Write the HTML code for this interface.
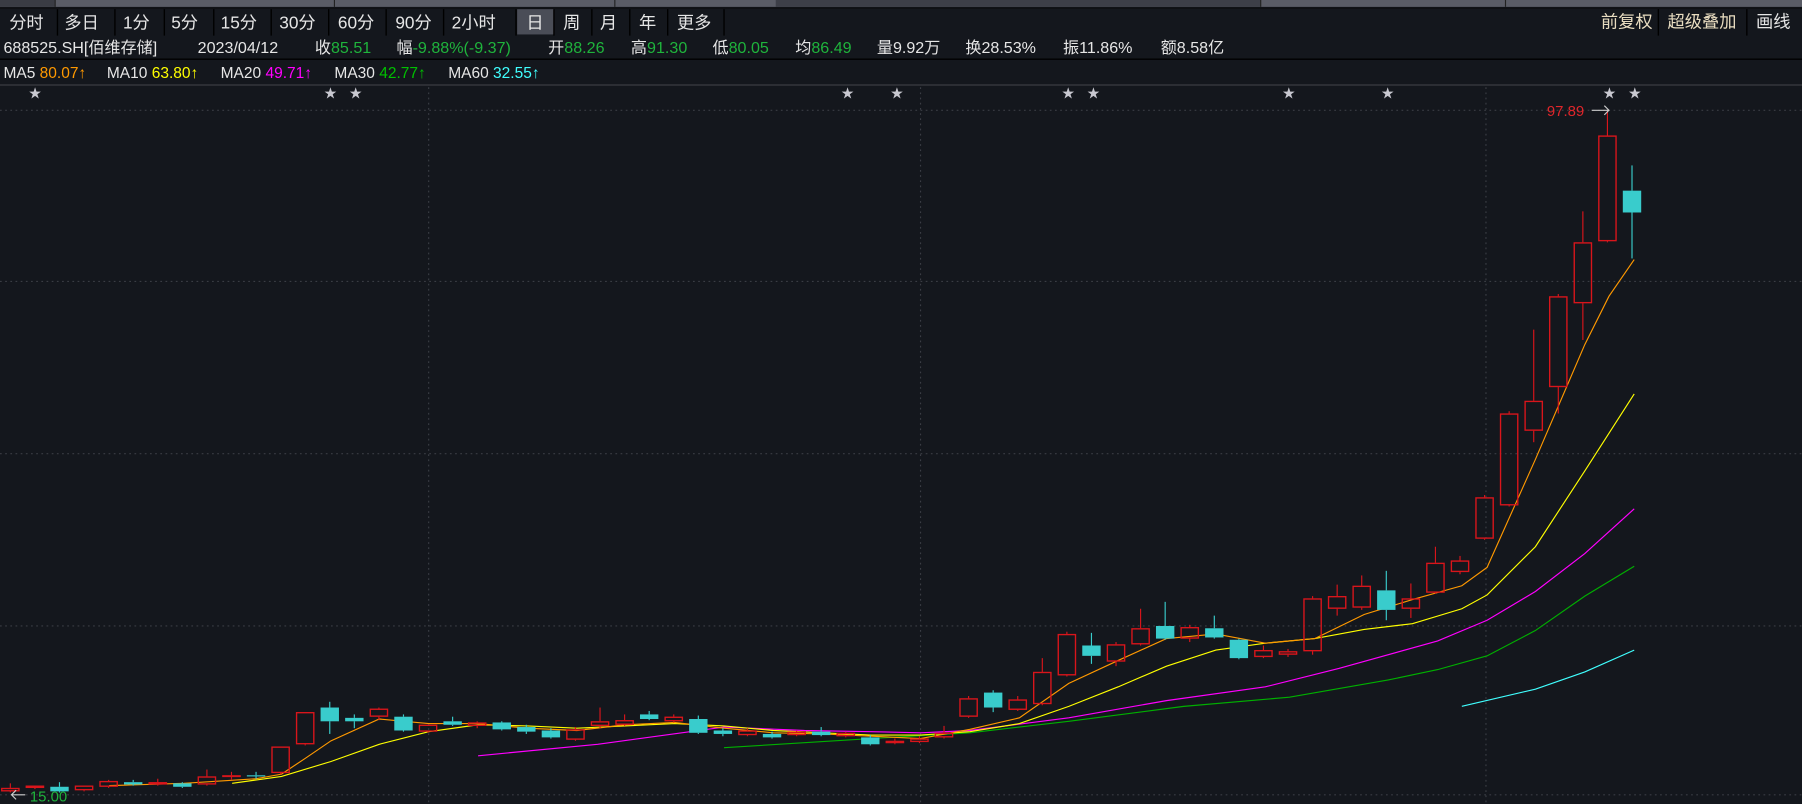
<!DOCTYPE html>
<html><head><meta charset="utf-8">
<style>
html,body{margin:0;padding:0;background:#14171d;width:1802px;height:804px;overflow:hidden}
svg{display:block}
text{font-family:"Liberation Sans","Noto Sans CJK SC",sans-serif}
</style></head>
<body>
<svg id="s" width="1802" height="804" viewBox="0 0 1568 700" preserveAspectRatio="none" xmlns="http://www.w3.org/2000/svg">
<rect width="1568" height="700" fill="#14171d"/>
<!-- top gray strip -->
<rect x="0" y="0" width="1568" height="6" fill="#5a5c66"/>
<rect x="0" y="0" width="48" height="6" fill="#3a3c44"/>
<line x1="48" y1="0" x2="48" y2="6" stroke="#222"/>
<line x1="291" y1="0" x2="291" y2="6" stroke="#222"/>
<line x1="535" y1="0" x2="535" y2="6" stroke="#222"/>
<rect x="675" y="0" width="422" height="6" fill="#3d3f48"/>
<line x1="1097" y1="0" x2="1097" y2="6" stroke="#222"/>
<line x1="1310" y1="0" x2="1310" y2="6" stroke="#222"/>
<line x1="0" y1="7" x2="1568" y2="7" stroke="#0c0d10"/>
<!-- toolbar -->
<rect x="450" y="8" width="32" height="22" fill="#4a4d57"/>
<g fill="#e6e6e6" font-size="15">
<text x="8" y="25">分时</text><text x="56" y="25">多日</text><text x="107" y="25">1分</text>
<text x="149" y="25">5分</text><text x="192" y="25">15分</text><text x="243" y="25">30分</text>
<text x="294" y="25">60分</text><text x="344" y="25">90分</text><text x="393" y="25">2小时</text>
<text x="458" y="25">日</text><text x="490" y="25">周</text><text x="522" y="25">月</text>
<text x="556" y="25">年</text><text x="589" y="25">更多</text>
<text x="1393" y="24" fill="#e8dcc0">前复权</text><text x="1451" y="24" fill="#e8dcc0">超级叠加</text><text x="1528" y="24">画线</text>
</g>
<g stroke="#000" stroke-width="1.2">
<line x1="50" y1="8" x2="50" y2="31"/><line x1="100" y1="8" x2="100" y2="31"/><line x1="143" y1="8" x2="143" y2="31"/>
<line x1="186" y1="8" x2="186" y2="31"/><line x1="236" y1="8" x2="236" y2="31"/><line x1="286" y1="8" x2="286" y2="31"/>
<line x1="336" y1="8" x2="336" y2="31"/><line x1="386" y1="8" x2="386" y2="31"/><line x1="449" y1="8" x2="449" y2="31"/>
<line x1="482" y1="8" x2="482" y2="31"/><line x1="515" y1="8" x2="515" y2="31"/><line x1="548" y1="8" x2="548" y2="31"/>
<line x1="581" y1="8" x2="581" y2="31"/><line x1="630" y1="8" x2="630" y2="31"/>
<line x1="1443" y1="8" x2="1443" y2="31"/><line x1="1520" y1="8" x2="1520" y2="31"/>
</g>
<!-- info line -->
<g font-size="14" fill="#e6e6e6">
<text x="3" y="46">688525.SH[佰维存储]</text>
<text x="172" y="46">2023/04/12</text>
<text x="274" y="46">收<tspan fill="#1fb43c">85.51</tspan></text>
<text x="345" y="46">幅<tspan fill="#1fb43c">-9.88%(-9.37)</tspan></text>
<text x="477" y="46">开<tspan fill="#1fb43c">88.26</tspan></text>
<text x="549" y="46">高<tspan fill="#1fb43c">91.30</tspan></text>
<text x="620" y="46">低<tspan fill="#1fb43c">80.05</tspan></text>
<text x="692" y="46">均<tspan fill="#1fb43c">86.49</tspan></text>
<text x="763" y="46">量9.92万</text>
<text x="840" y="46">换28.53%</text>
<text x="925" y="46">振11.86%</text>
<text x="1010" y="46">额8.58亿</text>
</g>
<line x1="0" y1="51.5" x2="1568" y2="51.5" stroke="#000" stroke-width="1.2"/>
<g font-size="13.5" fill="#e6e6e6">
<text x="3" y="68">MA5 <tspan fill="#ff9900">80.07↑</tspan></text>
<text x="93" y="68">MA10 <tspan fill="#ffff00">63.80↑</tspan></text>
<text x="192" y="68">MA20 <tspan fill="#ff00ff">49.71↑</tspan></text>
<text x="291" y="68">MA30 <tspan fill="#00c000">42.77↑</tspan></text>
<text x="390" y="68">MA60 <tspan fill="#40ffff">32.55↑</tspan></text>
</g>
<line x1="0" y1="74" x2="1568" y2="74" stroke="#3a3c42" stroke-width="1"/>
<!-- grid -->
<g stroke="#3a3d44" stroke-dasharray="1.5,3" stroke-width="1">
<line x1="0" y1="96" x2="1568" y2="96"/><line x1="0" y1="245" x2="1568" y2="245"/>
<line x1="0" y1="395" x2="1568" y2="395"/><line x1="0" y1="545" x2="1568" y2="545"/>
<line x1="0" y1="692" x2="1568" y2="692"/>
<line x1="373" y1="76" x2="373" y2="700"/><line x1="801" y1="76" x2="801" y2="700"/><line x1="1293" y1="76" x2="1293" y2="700"/>
</g>
<g id="stars" fill="#c8c8d0" font-size="11"></g>
<g id="ma"></g>
<g id="c"></g>
<text x="1346" y="101" fill="#e0262b" font-size="13">97.89</text>
<path d="M1385 96 H1400 M1396 92 L1400 96 L1396 100" stroke="#ccc" fill="none" stroke-width="1"/>
<path d="M22 692 H10 M14 688 L10 692 L14 696" stroke="#ccc" fill="none" stroke-width="1"/>
<text x="26" y="698" fill="#1fb43c" font-size="13">15.00</text>
</svg>
<script>
var NS="http://www.w3.org/2000/svg";
function el(p,t,a){var e=document.createElementNS(NS,t);for(var k in a)e.setAttribute(k,a[k]);p.appendChild(e);return e;}
var st=document.getElementById('stars');
[29,286,308,736,779,928,950,1120,1206,1399,1421].forEach(function(x){var t=el(st,'text',{x:x-4,y:85});t.textContent='★';});
// [type, top, bottom, high, low]; u=red up, d=cyan down
var C=[
['u',686,689,682,690],['u',684,686,684,687],['d',685,689,681,690],['u',684,688,684,689],['u',680,685,679,686],
['d',681,683,679,684],['u',681,683,678,684],['d',682,685,681,686],['u',676,683,670,684],['u',675,676,672,679],
['d',675,676,672,678],['u',650,673,650,674],['u',620,648,620,649],['d',616,628,611,639],['d',625,628,622,634],
['u',617,624,616,627],['d',624,636,622,637],['u',631,637,631,638],['d',628,631,624,632],['u',629,632,628,634],
['d',629,635,628,636],['d',633,637,631,639],['d',636,642,634,643],['u',635,644,633,645],['u',628,632,616,634],
['u',627,631,622,632],['d',622,626,619,627],['u',624,628,622,629],['d',626,638,623,639],['d',636,639,634,641],
['u',636,640,634,641],['d',639,642,637,643],['u',637,640,636,641],['d',637,640,633,641],['u',638,641,637,642],
['d',642,648,640,649],['u',645,647,643,648],['u',643,646,641,647],['u',638,642,632,643],['u',608,624,606,625],
['d',603,616,601,620],['u',609,618,606,619],['u',585,613,573,614],['u',552,588,550,589],['d',562,571,551,578],
['u',561,576,559,580],['u',547,561,530,562],['d',545,556,524,557],['u',546,556,544,559],['d',547,555,536,556],
['d',557,573,556,574],['u',566,572,562,573],['u',567,570,565,572],['u',521,567,519,570],['u',519,530,509,536],
['u',510,529,501,531],['d',514,531,497,540],['u',521,530,508,538],['u',490,516,476,517],['u',488,498,484,500],
['u',433,469,431,470],['u',360,440,358,441],['u',349,375,287,385],['u',258,337,256,360],['u',211,264,184,296],
['u',118,210,96,211],['d',166,185,144,225]];
var g=document.getElementById('c');
C.forEach(function(c,i){
 var x=9+i*21.38, w=16, col=c[0]=='u'?'#d9151b':'#39cccc';
 el(g,'line',{x1:x,y1:c[3],x2:x,y2:c[1],stroke:col,'stroke-width':1});
 el(g,'line',{x1:x,y1:c[2],x2:x,y2:c[4],stroke:col,'stroke-width':1});
 var h=Math.max(c[2]-c[1],1);
 if(c[0]=='u') el(g,'rect',{x:x-w/2+0.5,y:c[1]+0.5,width:w-1,height:Math.max(h-1,0.5),fill:'none',stroke:col,'stroke-width':1.2});
 else el(g,'rect',{x:x-w/2,y:c[1],width:w,height:h,fill:col});
});
var M=[
['#00b000',[[630,651],[758,643],[844,638],[930,628],[1030,615],[1122,607],[1208,592],[1251,583],[1294,571],[1336,549],[1379,519],[1422,493]]],
['#ff00ff',[[416,658],[520,648],[630,633],[700,636],[758,637],[801,638],[844,636],[930,625],[1015,610],[1101,598],[1165,582],[1251,558],[1294,540],[1336,515],[1379,482],[1422,443]]],
['#40ffff',[[1272,615],[1336,600],[1379,585],[1422,566]]],
['#ffff00',[[202,682],[245,676],[288,663],[330,648],[373,637],[416,631],[459,632],[502,634],[544,632],[587,630],[630,632],[673,636],[716,638],[758,640],[801,640],[844,637],[887,630],[930,615],[973,598],[1015,580],[1058,566],[1101,560],[1144,556],[1187,548],[1229,543],[1272,530],[1294,518],[1336,476],[1379,410],[1422,343]]],
['#ff9900',[[95,684],[160,682],[223,678],[245,674],[266,660],[288,645],[330,626],[373,630],[416,630],[459,634],[502,636],[544,631],[587,629],[630,634],[673,638],[716,639],[758,641],[801,643],[844,635],[887,625],[930,595],[973,575],[1015,556],[1058,552],[1101,560],[1144,556],[1187,535],[1229,522],[1272,510],[1294,494],[1336,400],[1379,300],[1400,258],[1422,226]]]
];
var mg=document.getElementById('ma');
M.forEach(function(m){el(mg,'polyline',{points:m[1].map(function(p){return p.join(',')}).join(' '),fill:'none',stroke:m[0],'stroke-width':1});});
</script>
</body></html>
